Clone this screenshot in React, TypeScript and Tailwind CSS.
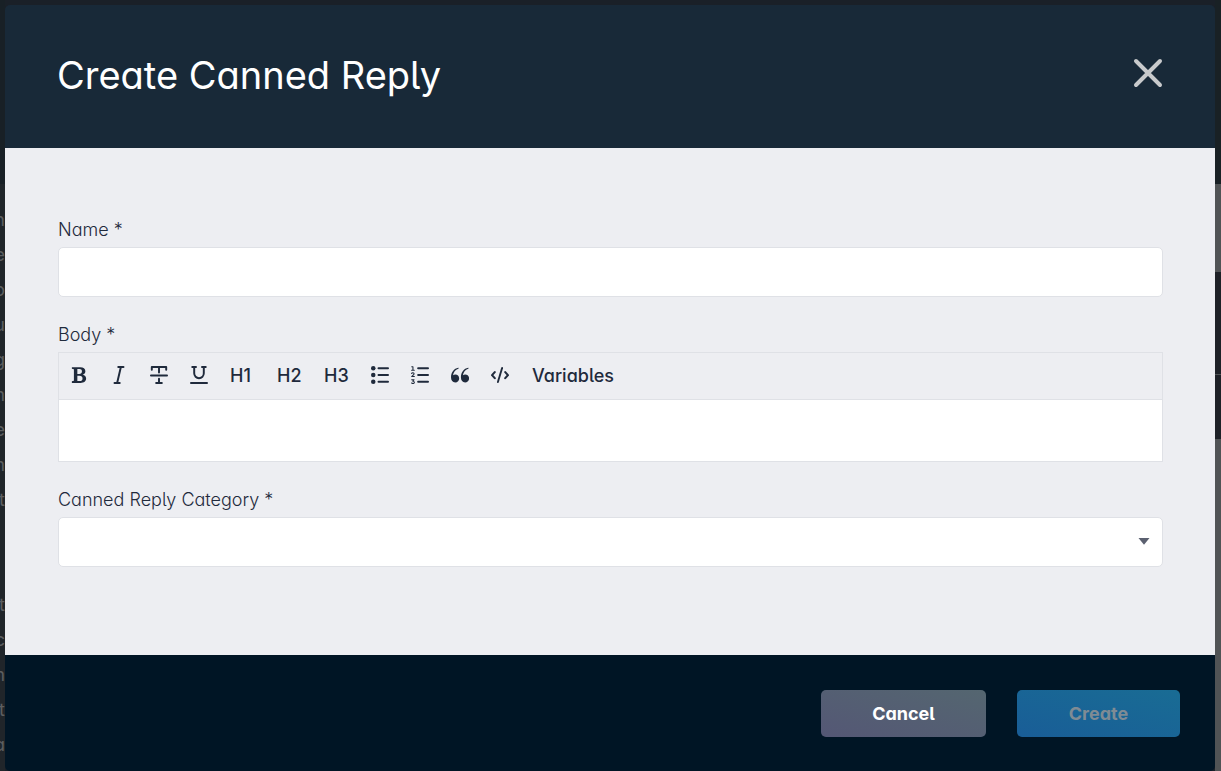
import type { ReactNode } from 'react'

interface Tool {
  label: string
  icon: ReactNode
}

function Icon({ children }: { children: ReactNode }) {
  return (
    <svg
      viewBox="0 0 24 24"
      className="size-[18px]"
      fill="none"
      stroke="currentColor"
      strokeWidth="2.6"
      strokeLinecap="round"
      strokeLinejoin="round"
      aria-hidden="true"
    >
      {children}
    </svg>
  )
}

const markTools: Tool[] = [
  {
    label: 'Bold',
    icon: (
      <Icon>
        <path
          d="M2.5 1.5h11.1c4.4 0 6.9 2.1 6.9 5.4 0 2.4-1.4 4.1-3.7 4.8 3 .6 4.7 2.4 4.7 5.1 0 3.7-2.8 5.9-7.3 5.9H2.5v-2.4l2.7-.5V4.2l-2.7-.5zm7.3 2.4v6.7h2.5c2.4 0 3.6-1.1 3.6-3.5 0-2.2-1.2-3.2-3.4-3.2zm0 9v7.2h3c2.6 0 3.9-1.1 3.9-3.6s-1.4-3.6-4.1-3.6z"
          fill="currentColor"
          fillRule="evenodd"
          stroke="none"
        />
      </Icon>
    ),
  },
  {
    label: 'Italic',
    icon: (
      <Icon>
        <path d="M11 1.4h7M6 22.6h7M14.5 1.4L9.5 22.6" />
      </Icon>
    ),
  },
  {
    label: 'Strikethrough',
    icon: (
      <Icon>
        <path d="M2.4 5V1.4h19.2V5M12 1.4v7.2M1.3 12.6h21.4M12 17v5.6M8.2 22.6h7.6" />
      </Icon>
    ),
  },
  {
    label: 'Underline',
    icon: (
      <Icon>
        <path d="M3 1.4h5M16 1.4h5M5.6 1.4v8.4a6.4 6.4 0 0 0 12.8 0V1.4M1.3 22.6h21.4" />
      </Icon>
    ),
  },
]

const headings = ['H1', 'H2', 'H3']

const blockTools: Tool[] = [
  {
    label: 'Bullet list',
    icon: (
      <Icon>
        <g fill="currentColor" stroke="none">
          <circle cx="3" cy="3" r="3" />
          <circle cx="3" cy="12" r="3" />
          <circle cx="3" cy="21" r="3" />
        </g>
        <path d="M10 3h12.7M10 12h12.7M10 21h12.7" />
      </Icon>
    ),
  },
  {
    label: 'Ordered list',
    icon: (
      <Icon>
        <path d="M9.5 3h13.2M9.5 12h13.2M9.5 21h13.2" />
        <path
          d="M1 .9h1.6v4.6M.8 5.7h3.6M.8 10c.5-1.4 3.3-1.3 3.3.4 0 1.2-1.8 2-3.2 3.6h3.6M.9 18.2h3.2l-1.7 2c2.8 0 2.6 3.2.3 3.2-.9 0-1.5-.3-1.9-.8"
          strokeWidth="1.4"
        />
      </Icon>
    ),
  },
  {
    label: 'Quote',
    icon: (
      <Icon>
        <g fill="currentColor" stroke="none">
          <path d="M9.6 2.4C4.2 3.4 0 8.4 0 15c0 4.3 2.3 6.9 5.6 6.9 3.1 0 5.3-2.3 5.3-5.3 0-3.1-2.2-5.2-5.1-5.2-1.2 0-2.3.4-3.1 1 .5-4.1 3-7.3 7-8.8.8-.4.6-1.3-.1-1.2z" />
          <path d="M22.8 2.4c-5.4 1-9.6 6-9.6 12.6 0 4.3 2.3 6.9 5.6 6.9 3.1 0 5.3-2.3 5.3-5.3 0-3.1-2.2-5.2-5.1-5.2-1.2 0-2.3.4-3.1 1 .5-4.1 3-7.3 7-8.8.8-.4.6-1.3-.1-1.2z" />
        </g>
      </Icon>
    ),
  },
  {
    label: 'Code',
    icon: (
      <Icon>
        <path d="M5 8.2L1.4 12.2 5 16.2M19 8.2l3.6 4-3.6 4" strokeWidth="2.8" />
        <path d="M14.8 2.6L9.2 21.4" strokeWidth="2.5" />
      </Icon>
    ),
  },
]

// Page lines that peek out beside the dialog
const pageLines = ['n', 'e', 'o', 'u', 'g', 'm', 'e', 'm', 't', '', '', 't', 'c', 'm', 't', 'a']

function IconButton({ label, icon }: Tool) {
  return (
    <button
      type="button"
      aria-label={label}
      className="flex h-[46px] w-10 items-center justify-center pb-0.5"
    >
      {icon}
    </button>
  )
}

function Backdrop() {
  return (
    <div className="absolute inset-0 flex justify-between overflow-hidden bg-[#1a2028]" aria-hidden="true">
      <div className="flex w-[5px] flex-col">
        <div className="h-[184px] shrink-0 bg-[#182026]" />
        <div className="flex grow flex-col items-end overflow-hidden bg-[#20252a] pt-[18px] text-lg leading-[35px] text-[#5c5e60]">
          {pageLines.map((line, idx) => (
            <span key={idx} className="h-[35px] shrink-0">
              {line}
            </span>
          ))}
        </div>
      </div>
      <div className="flex w-[6px] flex-col">
        <div className="h-[184px] shrink-0 bg-[#192125]" />
        <div className="h-[88px] shrink-0 bg-[#505355]" />
        <div className="h-[102px] shrink-0 bg-[#1e2127]" />
        <div className="h-[65px] shrink-0 border-t border-[#505355] bg-[#1e2127]" />
        <div className="grow bg-[#505355]" />
      </div>
    </div>
  )
}

export default function App() {
  return (
    <div className="relative min-h-screen pt-[5px] pr-[6px] pl-[5px] font-['Inter','Open_Sans',sans-serif] text-[#1f2a3c] [font-feature-settings:'cv11','cv05']">
      <Backdrop />

      <div role="dialog" aria-labelledby="dialog-title" className="relative">
        {/* Header */}
        <header className="flex h-[143px] items-center justify-between rounded-t-[5px] bg-[#182938] px-[52px] pb-1">
          <h1 id="dialog-title" className="text-[38px] leading-12 text-white">
            Create Canned Reply
          </h1>
          <button type="button" aria-label="Close" className="mb-1 text-[#c8cacc]">
            <svg viewBox="0 0 30 30" className="size-[30px]" aria-hidden="true">
              <path
                d="M3 3l24 24M27 3L3 27"
                stroke="currentColor"
                strokeWidth="4"
                strokeLinecap="round"
              />
            </svg>
          </button>
        </header>

        {/* Form */}
        <form
          id="reply-form"
          className="flex flex-col gap-[26px] bg-[#edeef2] pt-[70px] pr-[52px] pb-[88px] pl-[53px] text-lg"
        >
          <div className="flex flex-col gap-[5px]">
            <label htmlFor="name" className="leading-6 font-light">
              Name *
            </label>
            <input
              id="name"
              type="text"
              className="h-[50px] rounded-[5px] border border-[#dfe1e6] bg-white px-3"
            />
          </div>

          <div className="flex flex-col gap-[5px]">
            <label htmlFor="body" className="leading-6 font-light">
              Body *
            </label>
            <div className="border border-[#dfe1e6]">
              <div className="flex items-center border-b border-[#dfe1e6]">
                {markTools.map((tool) => (
                  <IconButton key={tool.label} {...tool} />
                ))}
                {headings.map((heading) => (
                  <button
                    key={heading}
                    type="button"
                    className="h-[46px] w-[47px] pl-[11px] text-left font-medium"
                  >
                    {heading}
                  </button>
                ))}
                {blockTools.map((tool) => (
                  <IconButton key={tool.label} {...tool} />
                ))}
                <button type="button" className="h-[46px] px-3 font-medium">
                  Variables
                </button>
              </div>
              <textarea id="body" className="block h-[61px] w-full resize-none bg-white px-3 py-2" />
            </div>
          </div>

          <div className="flex flex-col gap-[5px]">
            <label htmlFor="category" className="leading-6 font-light">
              Canned Reply Category *
            </label>
            <div className="relative">
              <select
                id="category"
                className="block h-[50px] w-full appearance-none rounded-[5px] border border-[#dfe1e6] bg-white px-3"
              >
                <option value="" />
              </select>
              <svg
                viewBox="0 0 12 7"
                className="pointer-events-none absolute top-[21px] right-[13px] h-[7px] w-3"
                aria-hidden="true"
              >
                <path d="M.5 0h11L6 6.8z" fill="#5b6070" />
              </svg>
            </div>
          </div>
        </form>

        {/* Footer */}
        <footer className="flex justify-end gap-[31px] rounded-b-[5px] bg-[#001525] px-[35px] pt-[35px] pb-[34px] text-lg font-bold">
          <button
            type="button"
            className="h-[47px] w-[165px] rounded-[5px] bg-linear-to-tr from-[#545775] to-[#546670] text-white"
          >
            Cancel
          </button>
          <button
            type="submit"
            form="reply-form"
            disabled
            className="h-[47px] w-[163px] rounded-[5px] bg-linear-to-tr from-[#195d97] to-[#196c94] text-[#7f8b94]"
          >
            Create
          </button>
        </footer>
      </div>
    </div>
  )
}
